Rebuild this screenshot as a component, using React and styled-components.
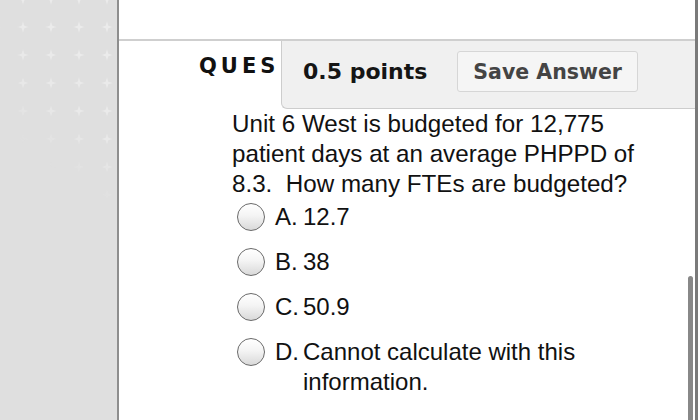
import React from 'react';
import styled, { createGlobalStyle } from 'styled-components';

const GlobalStyle = createGlobalStyle`
  html, body {
    margin: 0;
    padding: 0;
    background: #fff;
    overflow: hidden;
  }
  #root {
    width: 700px;
    height: 420px;
  }
`

const options = [
  { key: 'A.', text: '12.7' },
  { key: 'B.', text: '38' },
  { key: 'C.', text: '50.9' },
  { key: 'D.', text: 'Cannot calculate with this information.' },
];

const PlusPattern = () => (
  <svg width="117" height="420">
    <defs>
      <pattern id="plus" x="-19" y="-15" width="28" height="28" patternUnits="userSpaceOnUse">
        <path d="M14 8.5 L15.3 12.7 L19.5 14 L15.3 15.3 L14 19.5 L12.7 15.3 L8.5 14 L12.7 12.7 Z" fill="#ebebeb" />
      </pattern>
      <linearGradient id="fade" gradientUnits="userSpaceOnUse" x1="117" y1="60" x2="40" y2="160">
        <stop offset="0" stopColor="#fff" stopOpacity="1" />
        <stop offset="0.55" stopColor="#fff" stopOpacity="0.8" />
        <stop offset="1" stopColor="#fff" stopOpacity="0" />
      </linearGradient>
      <mask id="fadeMask">
        <rect width="117" height="420" fill="url(#fade)" />
      </mask>
    </defs>
    <rect width="117" height="420" fill="url(#plus)" mask="url(#fadeMask)" />
  </svg>
);

export default function App() {
  return (
    <>
      <GlobalStyle />
      <Page>
        <Sidebar>
          <PlusPattern />
        </Sidebar>
        <Main>
          <TopBar />
          <HeaderRow>
            <Title>QUES</Title>
            <PointsPanel>
              <Points>0.5 points</Points>
              <SaveButton type="button">Save Answer</SaveButton>
            </PointsPanel>
          </HeaderRow>
          <Body>
            <QuestionText>
              Unit 6 West is budgeted for 12,775 patient days at an average PHPPD of 8.3.&nbsp; How many FTEs are budgeted?
            </QuestionText>
            <OptionList>
              {options.map((o) => (
                <Option key={o.key}>
                  <Radio />
                  <OptionKey>{o.key}</OptionKey>
                  <OptionText>{o.text}</OptionText>
                </Option>
              ))}
            </OptionList>
          </Body>
          <ScrollThumb />
        </Main>
      </Page>
    </>
  );
}

const Page = styled.div`
  display: flex;
  width: 700px;
  height: 420px;
  background: #fff;
`

const Sidebar = styled.div`
  width: 117px;
  flex-shrink: 0;
  background: #dfdfdf;
  overflow: hidden;

  svg {
    display: block;
  }
`

const Main = styled.div`
  position: relative;
  width: 576px;
  border-left: 2px solid #8e8e8e;
  border-right: 3px solid #7a7a7a;
  display: flex;
  flex-direction: column;
  font-family: "Liberation Sans", Arial, sans-serif;
  color: #111;
`

const TopBar = styled.div`
  height: 39px;
  border-bottom: 2px solid #cfcfcf;
  flex-shrink: 0;
`

const HeaderRow = styled.div`
  display: flex;
  align-items: flex-start;
  height: 68px;
  padding-left: 80px;
`

const Title = styled.h2`
  width: 82px;
  margin: 13px 0 0;
  font-family: "DejaVu Sans", Verdana, sans-serif;
  font-size: 21px;
  font-weight: bold;
  letter-spacing: 4px;
  color: #111;
  overflow: hidden;
  white-space: nowrap;
`

const PointsPanel = styled.div`
  flex: 1;
  display: flex;
  align-items: center;
  gap: 30px;
  height: 68px;
  box-sizing: border-box;
  padding: 10px 0 16px 21px;
  background: #f0f0f0;
  border-left: 1px solid #cdcdcd;
  border-bottom: 1px solid #cdcdcd;
  border-bottom-left-radius: 6px;
`

const Points = styled.span`
  font-family: "DejaVu Sans", Verdana, sans-serif;
  font-size: 22px;
  font-weight: bold;
  color: #151515;
`

const SaveButton = styled.button`
  height: 41px;
  padding: 0 15px;
  background: #f5f5f5;
  border: 1px solid #d6d6d6;
  border-radius: 3px;
  font-family: "DejaVu Sans", Verdana, sans-serif;
  font-size: 20.5px;
  font-weight: bold;
  color: #444;
`

const Body = styled.div`
  padding-left: 113px;
`

const QuestionText = styled.p`
  width: 420px;
  margin: 0;
  font-size: 24.2px;
  line-height: 30px;
`

const OptionList = styled.div`
  display: flex;
  flex-direction: column;
  gap: 15px;
  margin-top: 3px;
  padding-left: 5px;
`

const Option = styled.div`
  display: flex;
  align-items: flex-start;
  font-size: 24px;
  line-height: 30px;
`

const Radio = styled.span`
  width: 28px;
  height: 28px;
  box-sizing: border-box;
  flex-shrink: 0;
  margin-top: 1px;
  margin-right: 10px;
  border: 1.5px solid #6a6a6a;
  border-radius: 50%;
  background: linear-gradient(#ffffff, #f4f4f4 45%, #d9d9d9);
`

const OptionKey = styled.span`
  width: 28px;
  flex-shrink: 0;
`

const OptionText = styled.span`
  max-width: 300px;
`

const ScrollThumb = styled.div`
  position: absolute;
  right: 2px;
  top: 276px;
  bottom: 0;
  width: 5px;
  border-radius: 3px 3px 0 0;
  background: #888;
`
